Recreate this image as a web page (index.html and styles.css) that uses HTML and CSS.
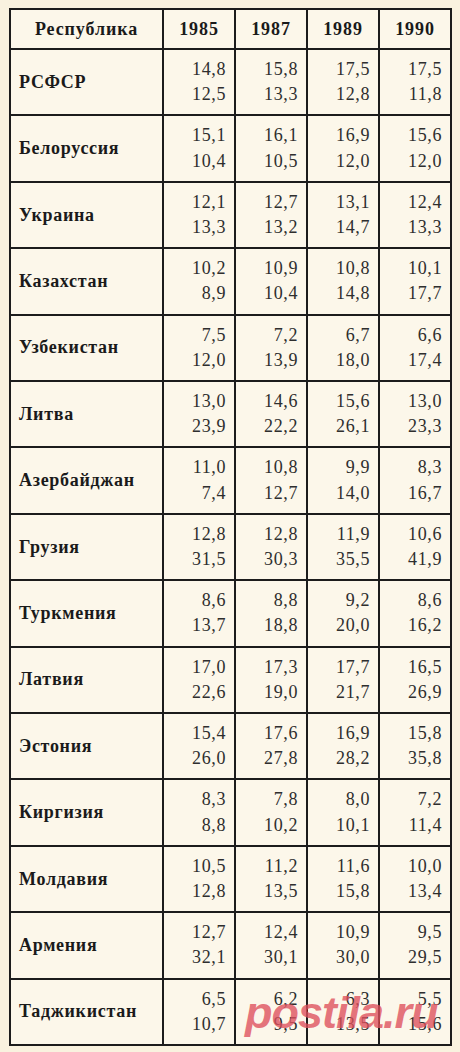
FILE: index.html
```html
<!DOCTYPE html>
<html lang="ru">
<head>
<meta charset="utf-8">
<title>Таблица</title>
<link rel="stylesheet" href="styles.css">
</head>
<body>
<div class="wrap">
<table class="data">
<colgroup>
<col class="c-name"><col class="c-yr"><col class="c-yr"><col class="c-yr"><col class="c-yr">
</colgroup>
<thead>
<tr><th>Республика</th><th>1985</th><th>1987</th><th>1989</th><th>1990</th></tr>
</thead>
<tbody>
<tr><td class="name">РСФСР</td><td class="num">14,8<br>12,5</td><td class="num">15,8<br>13,3</td><td class="num">17,5<br>12,8</td><td class="num">17,5<br>11,8</td></tr>
<tr><td class="name">Белоруссия</td><td class="num">15,1<br>10,4</td><td class="num">16,1<br>10,5</td><td class="num">16,9<br>12,0</td><td class="num">15,6<br>12,0</td></tr>
<tr><td class="name">Украина</td><td class="num">12,1<br>13,3</td><td class="num">12,7<br>13,2</td><td class="num">13,1<br>14,7</td><td class="num">12,4<br>13,3</td></tr>
<tr><td class="name">Казахстан</td><td class="num">10,2<br>8,9</td><td class="num">10,9<br>10,4</td><td class="num">10,8<br>14,8</td><td class="num">10,1<br>17,7</td></tr>
<tr><td class="name">Узбекистан</td><td class="num">7,5<br>12,0</td><td class="num">7,2<br>13,9</td><td class="num">6,7<br>18,0</td><td class="num">6,6<br>17,4</td></tr>
<tr><td class="name">Литва</td><td class="num">13,0<br>23,9</td><td class="num">14,6<br>22,2</td><td class="num">15,6<br>26,1</td><td class="num">13,0<br>23,3</td></tr>
<tr><td class="name">Азербайджан</td><td class="num">11,0<br>7,4</td><td class="num">10,8<br>12,7</td><td class="num">9,9<br>14,0</td><td class="num">8,3<br>16,7</td></tr>
<tr><td class="name">Грузия</td><td class="num">12,8<br>31,5</td><td class="num">12,8<br>30,3</td><td class="num">11,9<br>35,5</td><td class="num">10,6<br>41,9</td></tr>
<tr><td class="name">Туркмения</td><td class="num">8,6<br>13,7</td><td class="num">8,8<br>18,8</td><td class="num">9,2<br>20,0</td><td class="num">8,6<br>16,2</td></tr>
<tr><td class="name">Латвия</td><td class="num">17,0<br>22,6</td><td class="num">17,3<br>19,0</td><td class="num">17,7<br>21,7</td><td class="num">16,5<br>26,9</td></tr>
<tr><td class="name">Эстония</td><td class="num">15,4<br>26,0</td><td class="num">17,6<br>27,8</td><td class="num">16,9<br>28,2</td><td class="num">15,8<br>35,8</td></tr>
<tr><td class="name">Киргизия</td><td class="num">8,3<br>8,8</td><td class="num">7,8<br>10,2</td><td class="num">8,0<br>10,1</td><td class="num">7,2<br>11,4</td></tr>
<tr><td class="name">Молдавия</td><td class="num">10,5<br>12,8</td><td class="num">11,2<br>13,5</td><td class="num">11,6<br>15,8</td><td class="num">10,0<br>13,4</td></tr>
<tr><td class="name">Армения</td><td class="num">12,7<br>32,1</td><td class="num">12,4<br>30,1</td><td class="num">10,9<br>30,0</td><td class="num">9,5<br>29,5</td></tr>
<tr><td class="name">Таджикистан</td><td class="num">6,5<br>10,7</td><td class="num">6,2<br>9,5</td><td class="num">6,3<br>13,5</td><td class="num">5,5<br>15,6</td></tr>
</tbody>
</table>
<div class="watermark">postila.ru</div>
</div>
</body>
</html>
```

FILE: styles.css
```css
html, body {
  margin: 0;
  padding: 0;
  background: #f9f2df;
}

.wrap {
  position: relative;
  padding: 8px 0 0 9px;
}

.data {
  border-collapse: collapse;
  table-layout: fixed;
  width: 443px;
  border: 2px solid #1c1c1c;
  background: #fcf7ea;
  font-family: "Liberation Serif", Tinos, "DejaVu Serif", "Times New Roman", serif;
  color: #222;
}

.c-name { width: 153px; }
.c-yr { width: 72px; }

.data th,
.data td {
  border: 2px solid #1c1c1c;
}

.data th {
  font-size: 18px;
  font-weight: bold;
  line-height: 24px;
  letter-spacing: 0.9px;
  padding: 7px 4px;
  text-align: center;
  color: #1a1a1a;
}

.data td {
  padding: 7px 8px 7px 8px;
  vertical-align: middle;
}

.data td.name {
  font-size: 18px;
  font-weight: bold;
  letter-spacing: 0.7px;
  text-align: left;
  color: #1a1a1a;
  padding-left: 8px;
}

.data td.num {
  font-size: 18px;
  line-height: 25.2px;
  letter-spacing: 0.6px;
  text-align: right;
  padding-right: 8px;
  color: #2e2e2e;
}

.watermark {
  position: absolute;
  left: 245px;
  top: 987px;
  font-family: "Liberation Sans", Arial, sans-serif;
  font-weight: bold;
  font-style: italic;
  font-size: 45px;
  letter-spacing: -1px;
  color: rgba(222, 80, 92, 0.78);
  pointer-events: none;
}
```
